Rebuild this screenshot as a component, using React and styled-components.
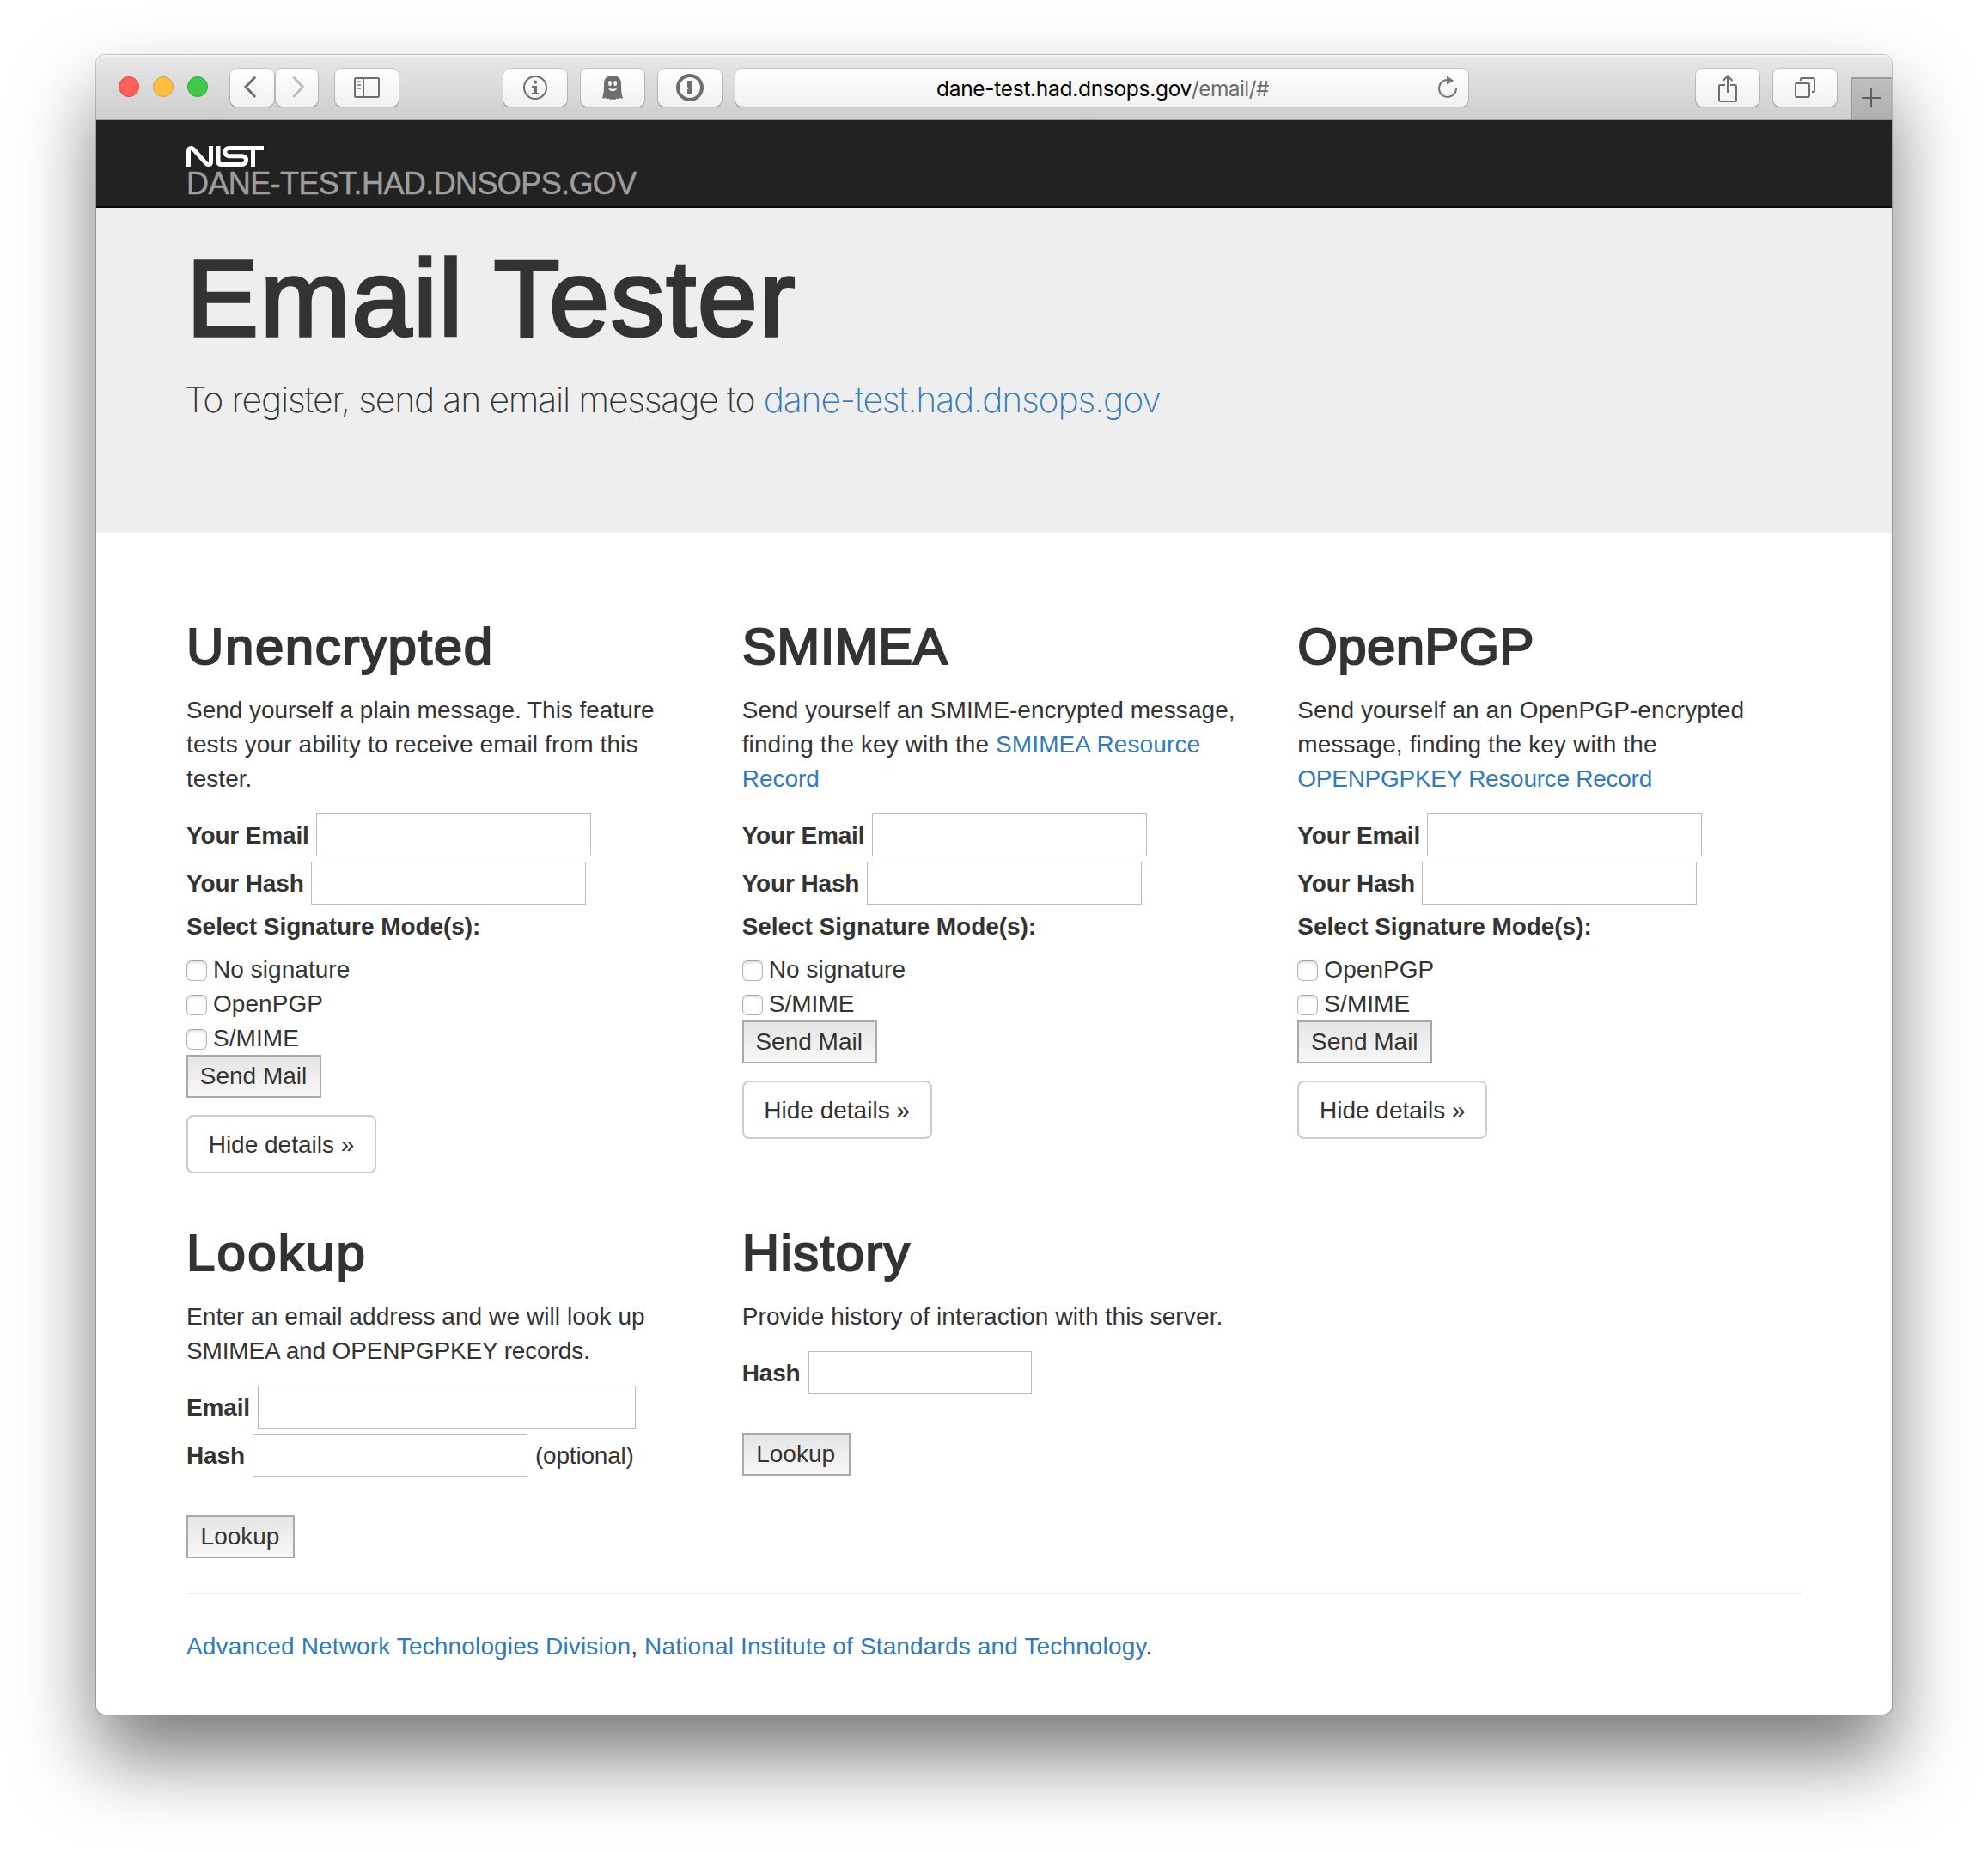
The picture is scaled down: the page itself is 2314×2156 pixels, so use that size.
import React from "react";
import styled, { createGlobalStyle, css } from "styled-components";

const Global = createGlobalStyle`
  *, *::before, *::after { box-sizing: border-box; }
  html, body { margin: 0; padding: 0; background: #fff; }
  body {
    font-family: "Liberation Sans", Arial, sans-serif;
    font-size: 28px;
    line-height: 40px;
    color: #333;
  }
`;

const Desktop = styled.div`
  width: 2314px;
  height: 2156px;
  padding: 64px 112px 160px;
  overflow: hidden;
  background: #fff;
`;

const Window = styled.div`
  display: flex;
  flex-direction: column;
  width: 2090px;
  height: 1932px;
  border-radius: 10px;
  background: #fff;
  box-shadow: 0 0 0 1px rgba(0, 0, 0, 0.2), 0 50px 90px rgba(0, 0, 0, 0.52);
`;

/* ---------- browser chrome ---------- */

const Toolbar = styled.div`
  display: flex;
  align-items: flex-start;
  flex: none;
  height: 76px;
  padding: 16px 0 0 26px;
  border-bottom: 2px solid #999;
  border-radius: 10px 10px 0 0;
  background: linear-gradient(#e7e7e7, #cecece);
  box-shadow: inset 0 2px 0 #f3f3f3;
`;

const Lights = styled.div`
  display: flex;
  gap: 16px;
  padding-top: 9px;
  margin-right: 26px;
`;

const Light = styled.span`
  width: 24px;
  height: 24px;
  border-radius: 50%;
  border: 1px solid ${(p) => p.$edge};
  background: ${(p) => p.$fill};
`;

const raised = css`
  border-radius: 8px;
  background: linear-gradient(#fefefe, #f1f1f1);
  box-shadow: 0 0 0 1px rgba(0, 0, 0, 0.13), 0 1px 1px rgba(0, 0, 0, 0.35);
`;

const ToolButton = styled.button`
  ${raised}
  display: flex;
  flex: none;
  width: ${(p) => p.$width || 74}px;
  height: 44px;
  margin: 0 ${(p) => (p.$gap === undefined ? 16 : p.$gap)}px 0 0;
  padding: 0;
  border: 0;
  color: #6e6e6e;
`;

const AddressBar = styled.div`
  ${raised}
  display: flex;
  align-items: center;
  flex: none;
  width: 853px;
  height: 44px;
  margin-right: 265px;
  padding-left: 234px;
  font-family: Inter, Roboto, sans-serif;
  font-size: 24.5px;
  line-height: 44px;
  letter-spacing: -0.6px;
  color: #6b6b6b;
`;

const Url = styled.span`
  padding-top: 2px;
`;

const Host = styled.span`
  letter-spacing: -0.3px;
  color: #000;
`;

const ReloadSlot = styled.span`
  display: flex;
  margin-left: auto;
  margin-right: 10px;
  color: #777;
`;

const NewTab = styled.div`
  width: 48px;
  height: 48px;
  margin-top: 10px;
  border: 2px solid #9b9b9b;
  border-width: 2px 0 0 2px;
  background: linear-gradient(#bebebe, #b0b0b0);
  color: #5f5f5f;
`;

const Icon = ({ w = 74, h = 44, sw = 2, children }) => (
  <svg width={w} height={h} viewBox={`0 0 ${w} ${h}`} fill="none" stroke="currentColor" strokeWidth={sw}>
    {children}
  </svg>
);

const BackIcon = () => (
  <Icon w={51} sw={3}>
    <path d="M28.3 10.5 18 21.3 28.3 32" strokeLinecap="round" />
  </Icon>
);
const ForwardIcon = () => (
  <Icon w={49} sw={3}>
    <path d="M21.2 10.5 31.5 21.3 21.2 32" stroke="#bebebe" strokeLinecap="round" />
  </Icon>
);
const SidebarIcon = () => (
  <Icon>
    <rect x="23" y="11" width="28" height="22" rx="1.2" />
    <path d="M33 11V33" />
    <path d="M26 15h4M26 19h4M26 23h4" stroke="#999" />
  </Icon>
);
const InfoIcon = () => (
  <Icon>
    <circle cx="37" cy="22" r="13" />
    <circle cx="37" cy="15.6" r="2.2" fill="currentColor" stroke="none" />
    <path d="M33 20h6v8h2v2h-8v-2h2.500v-6H33z" fill="currentColor" stroke="none" />
  </Icon>
);
const GhostIcon = () => (
  <Icon>
    <path
      d="M37 8c6.500 0 10 3.500 10 9.500 0 8 .5 12 2 17-1.500.3-2.500 0-3.500-.8-.8 1.500-2.200 2-4 .8-1.500 1.800-2.600 2-4.500.5-1.800 1.500-3.200 1.300-4.500-.5-1.500 1.200-3 .7-4-.8-1 .8-2 1.100-3.500.8 1.500-5 2-9 2-17C27 11.500 30.500 8 37 8z"
      fill="currentColor"
      stroke="none"
    />
    <ellipse cx="34" cy="17" rx="1.900" ry="3.100" fill="#f8f8f8" stroke="none" />
    <ellipse cx="40.200" cy="17" rx="1.900" ry="3.100" fill="#f8f8f8" stroke="none" />
    <path d="M32.200 22.200q5 3 10 0-1 4-5 4t-5-4z" fill="#f8f8f8" stroke="none" />
  </Icon>
);
const KeyholeIcon = () => (
  <Icon sw={4}>
    <circle cx="37" cy="22" r="14" />
    <path d="M34 14h6v5.500l-1.300 1.500L40 23v7h-6v-5.500l1.300-1.500L34 21z" fill="currentColor" stroke="none" />
  </Icon>
);
const ReloadIcon = () => (
  <Icon w={28} h={44}>
    <path d="M13.500 13A10 10 0 1 0 24 22.500" />
    <path d="M13 8.500 21.500 14 13 18.500z" fill="currentColor" stroke="none" />
  </Icon>
);
const ShareIcon = () => (
  <Icon>
    <path d="M34 19H28.200Q27 19 27 20.200V37Q27 38 28.200 38H46Q47 38 47 37V20.200Q47 19 46 19H40" />
    <path d="M37 28V9M31.500 14 37 8.500 42.500 14" />
  </Icon>
);
const TabsIcon = () => (
  <Icon>
    <rect x="26" y="17" width="16" height="16" rx="1.200" />
    <path d="M32 14V12.200Q32 11 33.200 11H46.800Q48 11 48 12.200V25.800Q48 27 46.800 27H45" />
  </Icon>
);
const PlusIcon = () => (
  <Icon w={46} h={46}>
    <path d="M11 22H33M22 11V33" />
  </Icon>
);

/* ---------- page header ---------- */

const Navbar = styled.header`
  flex: none;
  height: 102px;
  padding: 30px 105px 0;
  border-bottom: 2px solid #080808;
  background: #222;
`;

const Brand = styled.div`
  font-size: 36px;
  line-height: 39px;
  letter-spacing: -0.6px;
  color: #9d9d9d;
  -webkit-text-stroke: 0.5px #9d9d9d;
  svg { display: block; }
`;

const Logo = () => (
  <svg width="90" height="24" viewBox="0 0 90 24" fill="none" stroke="#fff" strokeWidth="5">
    <path d="M2.500 24V6Q2.500 2.500 5.500 2.500 7 2.500 8.500 4L22.500 19.800Q24 21.500 26 21.500 28.500 21.500 28.500 18V0" />
    <path d="M37 0V18Q37 21.500 40.500 21.500H64.700A4.900 4.900 0 0 0 64.700 11.700H49.400A4.600 4.600 0 0 1 49.400 2.500H90" />
    <path d="M77.500 2.500V24" />
  </svg>
);

const Jumbotron = styled.section`
  flex: none;
  height: 378px;
  padding: 43px 105px 0;
  background: #eee;
`;

const Title = styled.h1`
  margin: 0;
  font-size: 126px;
  font-weight: 400;
  line-height: 126px;
  letter-spacing: 1.6px;
  -webkit-text-stroke: 3.4px #333;
`;

const Lead = styled.p`
  margin: 25px 0 0 -2px;
  font-family: Inter, sans-serif;
  font-size: 41px;
  font-weight: 200;
  line-height: 59px;
  letter-spacing: -1.2px;
  white-space: nowrap;
`;

const Link = styled.a`
  color: #337ab7;
  text-decoration: none;
`;

/* ---------- content ---------- */

const Container = styled.main`
  padding: 60px 75px 0;
`;

const Row = styled.div`
  display: grid;
  grid-template-columns: repeat(3, 1fr);
`;

const Column = styled.section`
  padding: 40px 30px 0;
`;

const Heading = styled.h2`
  margin: 0 0 20px;
  font-size: 60px;
  font-weight: 400;
  line-height: 66px;
  letter-spacing: ${(p) => p.$track}px;
  -webkit-text-stroke: 2.1px #333;
`;

const Text = styled.div`
  padding-top: 1px;
  margin: 0 0 19px;
  white-space: nowrap;
`;

const Line = styled.div`
  letter-spacing: ${(p) => p.$track || 0}px;
`;

const Field = styled.div`
  display: flex;
  height: 56px;
`;

const FieldLabel = styled.label`
  flex: none;
  width: ${(p) => p.$width}px;
  padding-top: 7px;
  font-weight: 700;
  letter-spacing: -0.15px;
  white-space: nowrap;
`;

const Input = styled.input`
  flex: none;
  width: ${(p) => p.$width || 320}px;
  height: 50px;
  margin: 1px 9px 0 0;
  padding: 4px;
  border: 1px solid #bcbcbc;
  border-radius: 0;
  background: #fff;
  font: inherit;
`;

const Hint = styled.span`
  padding-top: 7px;
  letter-spacing: -0.2px;
`;

const GroupLabel = styled.div`
  padding-top: 1px;
  margin-bottom: 9px;
  font-weight: 700;
  letter-spacing: -0.06px;
`;

const Check = styled.label`
  display: flex;
  gap: 7px;
  height: 40px;
`;

const Mode = styled.span`
  padding-top: 1px;
  letter-spacing: 0.05px;
`;

const Box = styled.input`
  appearance: none;
  flex: none;
  width: 24px;
  height: 24px;
  margin: 10px 0 0;
  border: 1px solid #b6b6b6;
  border-top-color: #a2a2a2;
  border-radius: 6px;
  background: #fff;
  box-shadow: inset 0 2px 3px rgba(0, 0, 0, 0.13);
`;

const Submit = styled.button`
  display: block;
  width: ${(p) => p.$width}px;
  height: 50px;
  margin-top: ${(p) => p.$top || 0}px;
  padding: 0 1px 1px 0;
  border: 2px solid #a9a9a9;
  background: linear-gradient(#e5e5e5, #f7f7f7);
  font: inherit;
  color: #333;
  white-space: nowrap;
`;

const Details = styled.button`
  display: block;
  width: 221px;
  height: 68px;
  margin: 20px 0;
  padding: 2px 0 0;
  border: 2px solid #ccc;
  border-radius: 8px;
  background: #fff;
  font: inherit;
  color: #333;
`;

const Divider = styled.hr`
  height: 2px;
  margin: 40px 30px;
  border: 0;
  background: #eee;
`;

const Footer = styled.footer`
  padding: 1px 30px 0;
  letter-spacing: 0.15px;
`;

const TestForm = ({ title, track, modes, children }) => (
  <Column>
    <Heading $track={track}>{title}</Heading>
    <Text>{children}</Text>
    <Field>
      <FieldLabel $width={151}>Your Email</FieldLabel>
      <Input />
    </Field>
    <Field>
      <FieldLabel $width={145}>Your Hash</FieldLabel>
      <Input />
    </Field>
    <GroupLabel>Select Signature Mode(s):</GroupLabel>
    {modes.map((mode) => (
      <Check key={mode}>
        <Box type="checkbox" />
        <Mode>{mode}</Mode>
      </Check>
    ))}
    <Submit $width={157}>Send Mail</Submit>
    <Details>Hide details »</Details>
  </Column>
);

export default function App() {
  return (
    <>
      <Global />
      <Desktop>
        <Window>
          <Toolbar>
            <Lights>
              <Light $fill="#fc605b" $edge="#e0443e" />
              <Light $fill="#fdbf40" $edge="#dea032" />
              <Light $fill="#42c84a" $edge="#2bab30" />
            </Lights>
            <ToolButton $width={51} $gap={2}><BackIcon /></ToolButton>
            <ToolButton $width={49} $gap={20}><ForwardIcon /></ToolButton>
            <ToolButton $gap={122}><SidebarIcon /></ToolButton>
            <ToolButton><InfoIcon /></ToolButton>
            <ToolButton><GhostIcon /></ToolButton>
            <ToolButton><KeyholeIcon /></ToolButton>
            <AddressBar>
              <Url>
                <Host>dane-test.had.dnsops.gov</Host>/email/#
              </Url>
              <ReloadSlot><ReloadIcon /></ReloadSlot>
            </AddressBar>
            <ToolButton><ShareIcon /></ToolButton>
            <ToolButton><TabsIcon /></ToolButton>
            <NewTab><PlusIcon /></NewTab>
          </Toolbar>

          <Navbar>
            <Brand>
              <Logo />
              DANE-TEST.HAD.DNSOPS.GOV
            </Brand>
          </Navbar>

          <Jumbotron>
            <Title>Email Tester</Title>
            <Lead>
              To register, send an email message to <Link>dane-test.had.dnsops.gov</Link>
            </Lead>
          </Jumbotron>

          <Container>
            <Row>
              <TestForm title="Unencrypted" track={1.6} modes={["No signature", "OpenPGP", "S/MIME"]}>
                <Line $track={-0.03}>Send yourself a plain message. This feature</Line>
                <Line $track={0.13}>tests your ability to receive email from this</Line>
                <Line>tester.</Line>
              </TestForm>
              <TestForm title="SMIMEA" track={0.5} modes={["No signature", "S/MIME"]}>
                <Line $track={0.07}>Send yourself an SMIME-encrypted message,</Line>
                <Line $track={0.11}>
                  finding the key with the <Link>SMIMEA Resource</Link>
                </Line>
                <Line>
                  <Link>Record</Link>
                </Line>
              </TestForm>
              <TestForm title="OpenPGP" track={0.3} modes={["OpenPGP", "S/MIME"]}>
                <Line $track={0.08}>Send yourself an an OpenPGP-encrypted</Line>
                <Line $track={0.13}>message, finding the key with the</Line>
                <Line $track={-0.27}>
                  <Link>OPENPGPKEY Resource Record</Link>
                </Line>
              </TestForm>
            </Row>

            <Row>
              <Column>
                <Heading $track={2.2}>Lookup</Heading>
                <Text>
                  <Line $track={0.07}>Enter an email address and we will look up</Line>
                  <Line $track={-0.15}>SMIMEA and OPENPGPKEY records.</Line>
                </Text>
                <Field>
                  <FieldLabel $width={83}>Email</FieldLabel>
                  <Input $width={440} />
                </Field>
                <Field>
                  <FieldLabel $width={77}>Hash</FieldLabel>
                  <Input />
                  <Hint>(optional)</Hint>
                </Field>
                <Submit $width={126} $top={40}>Lookup</Submit>
              </Column>
              <Column>
                <Heading $track={1.4}>History</Heading>
                <Text>
                  <Line $track={0.12}>Provide history of interaction with this server.</Line>
                </Text>
                <Field>
                  <FieldLabel $width={77}>Hash</FieldLabel>
                  <Input $width={260} />
                </Field>
                <Submit $width={126} $top={40}>Lookup</Submit>
              </Column>
            </Row>

            <Divider />
            <Footer>
              <Link>Advanced Network Technologies Division</Link>,{" "}
              <Link>National Institute of Standards and Technology</Link>.
            </Footer>
          </Container>
        </Window>
      </Desktop>
    </>
  );
}
